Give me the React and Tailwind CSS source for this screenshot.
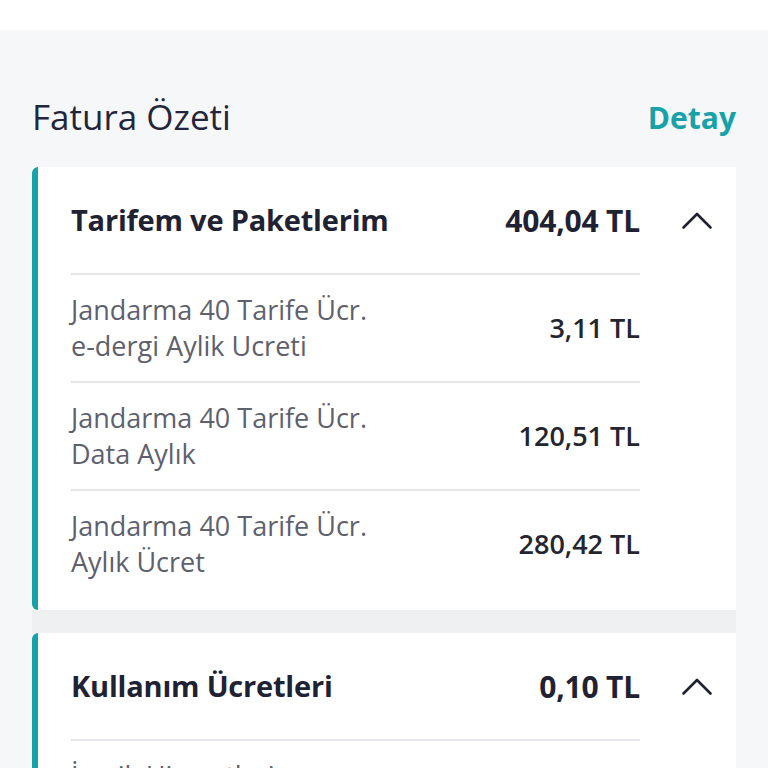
import React from 'react';

const sections = [
  {
    title: 'Tarifem ve Paketlerim',
    total: '404,04 TL',
    items: [
      { line1: 'Jandarma 40 Tarife Ücr.', line2: 'e-dergi Aylik Ucreti', amount: '3,11 TL' },
      { line1: 'Jandarma 40 Tarife Ücr.', line2: 'Data Aylık', amount: '120,51 TL' },
      { line1: 'Jandarma 40 Tarife Ücr.', line2: 'Aylık Ücret', amount: '280,42 TL' },
    ],
  },
  {
    title: 'Kullanım Ücretleri',
    total: '0,10 TL',
    items: [
      { line1: 'İçerik Hizmetleri', line2: 'Toplam', amount: '0,10 TL' },
    ],
  },
];

const ChevronUp = () => (
  <svg width="32" height="20" viewBox="0 0 32 20" fill="none">
    <path d="M2.5 17.5 L16 4 L29.5 17.5" stroke="#1f2233" strokeWidth="2.6" strokeLinecap="round" strokeLinejoin="round" />
  </svg>
);

const Section = ({ section }) => (
  <div className="flex bg-white">
    <div className="w-[6px] shrink-0 rounded-l-md bg-[#17a2a8]" />
    <div className="flex-1 pl-[33px]">
      <div className="flex items-center h-[106px]">
        <div className="flex items-center justify-between w-[569px]">
          <span className="text-[29px] font-bold tracking-[-0.2px] text-[#1f2233]">{section.title}</span>
          <span className="text-[30px] font-bold tracking-[-0.2px] text-[#1f2233]">{section.total}</span>
        </div>
        <div className="flex-1 flex justify-end pr-[23px]">
          <ChevronUp />
        </div>
      </div>
      <div className="w-[569px] pb-[13px]">
        {section.items.map((item, i) => (
          <div key={i} className="flex items-center justify-between h-[108px] border-t-2 border-[#e6e7eb]">
            <div className="text-[27px] leading-[36px] text-[#5e616c]">
              <div>{item.line1}</div>
              <div>{item.line2}</div>
            </div>
            <span className="text-[27px] font-semibold text-[#23252f]">{item.amount}</span>
          </div>
        ))}
      </div>
    </div>
  </div>
);

export default function App() {
  return (
    <div className="w-[768px] overflow-hidden bg-[#f6f7f9]" style={{ fontFamily: '"Open Sans", "Noto Sans", sans-serif', height: 768 }}>
      <div className="h-[30px] bg-white" />
      <div className="px-[32px]">
        <div className="flex items-center justify-between h-[137px] pt-[38px]">
          <h2 className="text-[35px] text-[#23263a]">Fatura Özeti</h2>
          <a className="text-[30px] font-bold text-[#17a2a8]">Detay</a>
        </div>
        <Section section={sections[0]} />
        <div className="h-[23px] bg-[#eff0f2]" />
        <Section section={sections[1]} />
      </div>
    </div>
  );
}
